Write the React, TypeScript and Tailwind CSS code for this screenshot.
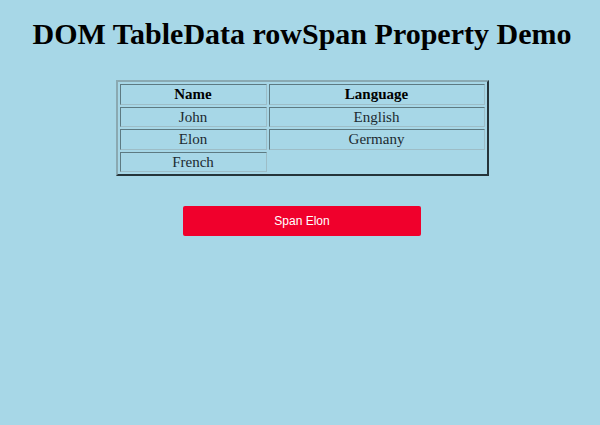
export default function App() {
  const rows = [
    ["John", "English"],
    ["Elon", "Germany"],
  ]

  const cell =
    "h-[20.5px] border border-t-[#5d7a82] border-l-[#5d7a82] border-r-[#9dbdc7] border-b-[#9dbdc7] p-0 text-center"

  return (
    <div className="min-h-[425px] bg-[#a7d7e7] pl-[4px] text-black" style={{ fontFamily: '"Liberation Serif", serif' }}>
      {/* Title */}
      <h1 className="pt-[18px] text-center text-[30px] font-bold leading-[32px]">DOM TableData rowSpan Property Demo</h1>

      {/* Table */}
      <div className="mt-[30px] flex justify-center">
        <table className="w-[373px] border-separate border-spacing-[2px] border-2 border-t-[#8aa9b2] border-l-[#8aa9b2] border-r-[#25343a] border-b-[#25343a] text-[15px] leading-[18px]">
          <thead>
            <tr>
              <th className={`${cell} w-[147px] font-bold`}>Name</th>
              <th className={`${cell} font-bold`}>Language</th>
            </tr>
          </thead>
          <tbody>
            {rows.map(([name, lang]) => (
              <tr key={name}>
                <td className={`${cell} text-[#1c2a30]`}>{name}</td>
                <td className={`${cell} text-[#1c2a30]`}>{lang}</td>
              </tr>
            ))}
            <tr>
              <td className={`${cell} text-[#1c2a30]`}>French</td>
              <td />
            </tr>
          </tbody>
        </table>
      </div>

      {/* Button */}
      <div className="mt-[30px] flex justify-center">
        <button
          className="h-[30px] w-[238px] rounded-[2px] bg-[#f0002c] text-[12px] text-white"
          style={{ fontFamily: '"Liberation Sans", Arial, sans-serif' }}
        >
          Span Elon
        </button>
      </div>
    </div>
  )
}
